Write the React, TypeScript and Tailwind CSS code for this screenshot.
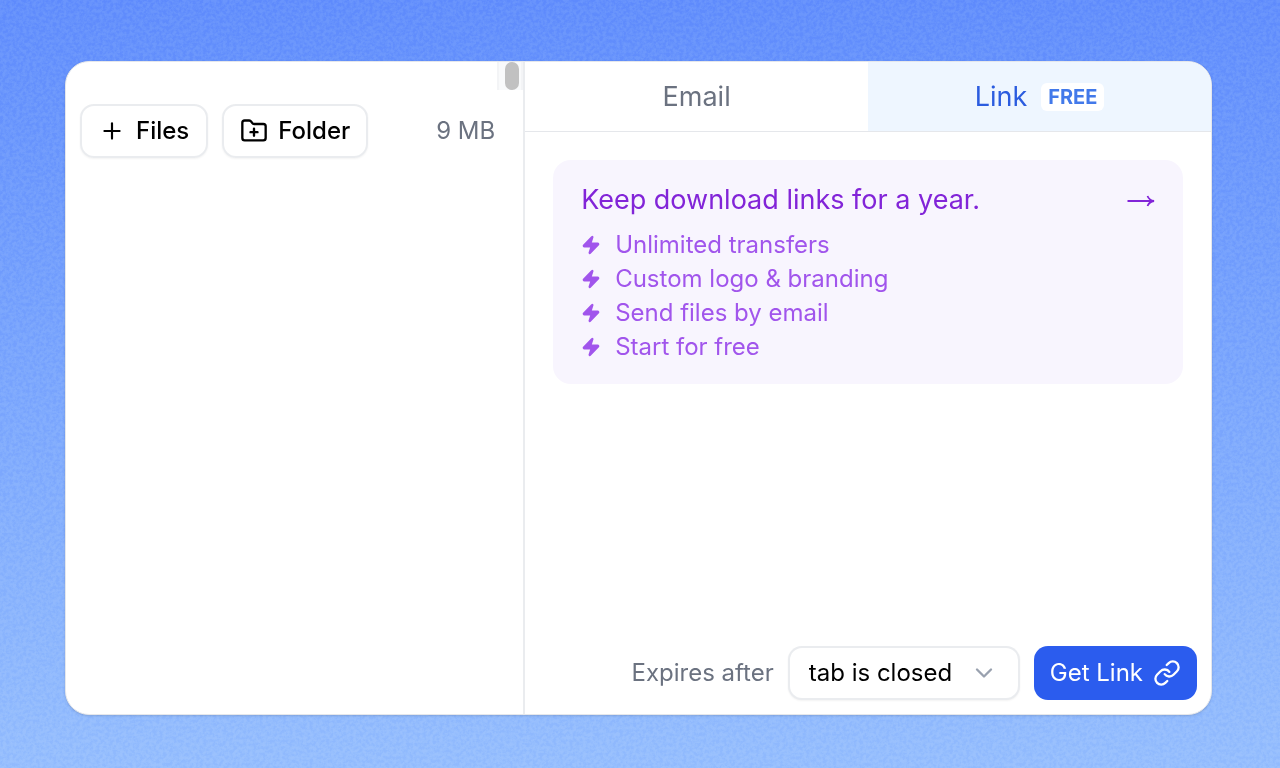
import { useState } from "react";
import { ChevronDown, FolderPlus, Link, Plus, Zap } from "lucide-react";

const perks = [
  "Unlimited transfers",
  "Custom logo & branding",
  "Send files by email",
  "Start for free",
];

function Grain() {
  return (
    <svg aria-hidden="true" className="absolute inset-0 h-full w-full opacity-10 mix-blend-soft-light">
      <filter id="grain" x="0" y="0" width="100%" height="100%" colorInterpolationFilters="sRGB">
        <feTurbulence type="fractalNoise" baseFrequency="0.3" numOctaves="3" />
        {/* grey noise, stretched for contrast */}
        <feColorMatrix
          type="matrix"
          values="3 0 0 0 -1  3 0 0 0 -1  3 0 0 0 -1  0 0 0 0 1"
        />
      </filter>
      <rect width="100%" height="100%" filter="url(#grain)" />
    </svg>
  );
}

function FilesPanel() {
  return (
    <section className="flex w-[40.1%] flex-col border-r-2 border-gray-200/80">
      {/* file list, scrolled to the top */}
      <div className="flex h-7 justify-end">
        <div className="flex w-[26px] justify-center border-x-2 border-gray-100 bg-gray-50 pl-1">
          <div className="h-7 w-[14px] rounded-full bg-[#c1c1c1]" />
        </div>
      </div>
      <div className="mt-[14px] flex items-center gap-[14px] pr-7 pl-[14px]">
        <button className="flex h-[54px] items-center gap-[11px] rounded-[14px] border-2 border-gray-200/80 px-[17px] font-medium text-black shadow-xs">
          <Plus size={26} strokeWidth={2} />
          Files
        </button>
        <button className="flex h-[54px] items-center gap-[10px] rounded-[14px] border-2 border-gray-200/80 px-4 font-medium text-black shadow-xs">
          <FolderPlus size={28} strokeWidth={2} />
          Folder
        </button>
        <span className="ml-auto text-[#6b7280]">9 MB</span>
      </div>
    </section>
  );
}

function Promo() {
  return (
    <a href="#plans" className="block rounded-[18px] bg-[#f8f5fe] px-7 py-5">
      <div className="flex items-center justify-between text-[27px] leading-10 text-[#8224d8]">
        <h2>Keep download links for a year.</h2>
        <svg width="28" height="14" viewBox="0 0 28 14" fill="none" stroke="currentColor" strokeWidth="1.8">
          <path d="M0.5 8H26M20.5 3C21.5 5.5 24 7.5 27 8C24 8.5 21.5 10.5 20.5 13" />
        </svg>
      </div>
      <ul className="mt-2 text-[#a155ec]">
        {perks.map((perk) => (
          <li key={perk} className="flex h-[34px] items-center gap-[14px]">
            <Zap size={20} fill="currentColor" />
            {perk}
          </li>
        ))}
      </ul>
    </a>
  );
}

export default function App() {
  const [tab, setTab] = useState("link");
  const [expiry, setExpiry] = useState("closed");

  const tabClass = (name: string) =>
    tab === name ? "bg-[#eef6ff] text-[#2b5cdf]" : "text-[#6b7280]";

  return (
    <main className="relative flex min-h-screen bg-linear-to-b from-[#6490fc] to-[#97bffd] pt-[61px] pr-[68px] pb-[53px] pl-[65px] font-['Inter',sans-serif] text-[24px] leading-8">
      <Grain />
      <div className="relative flex flex-1 overflow-hidden rounded-3xl border border-gray-200 bg-white shadow-sm">
        <FilesPanel />

        <section className="flex flex-1 flex-col">
          <div className="flex h-[70px] border-b border-gray-200 text-[27px]">
            <button
              onClick={() => setTab("email")}
              className={`flex flex-1 items-center justify-center ${tabClass("email")}`}
            >
              Email
            </button>
            <button
              onClick={() => setTab("link")}
              className={`flex flex-1 items-center justify-center gap-[14px] ${tabClass("link")}`}
            >
              Link
              <span className="rounded-md bg-white px-[7px] text-[20px] leading-7 font-bold text-[#4279ea]">
                FREE
              </span>
            </button>
          </div>

          <div className="p-7">
            <Promo />
          </div>

          <div className="mt-auto flex items-center justify-end gap-[14px] p-[14px]">
            <label htmlFor="expiry" className="text-[#6b7280]">
              Expires after
            </label>
            <div className="relative">
              <select
                id="expiry"
                value={expiry}
                onChange={(e) => setExpiry(e.target.value)}
                className="h-[54px] w-[232px] appearance-none rounded-[14px] border-2 border-gray-200/80 bg-white pr-14 pl-[19px] text-black shadow-xs"
              >
                <option value="closed">tab is closed</option>
                <option value="day">1 day</option>
                <option value="week">7 days</option>
              </select>
              <ChevronDown
                size={28}
                strokeWidth={2}
                className="pointer-events-none absolute top-[13px] right-[22px] text-gray-400"
              />
            </div>
            <button className="flex h-[54px] items-center gap-[10px] rounded-[14px] bg-[#2b5cee] px-4 text-white">
              Get Link
              <Link size={28} strokeWidth={2} />
            </button>
          </div>
        </section>
      </div>
    </main>
  );
}
